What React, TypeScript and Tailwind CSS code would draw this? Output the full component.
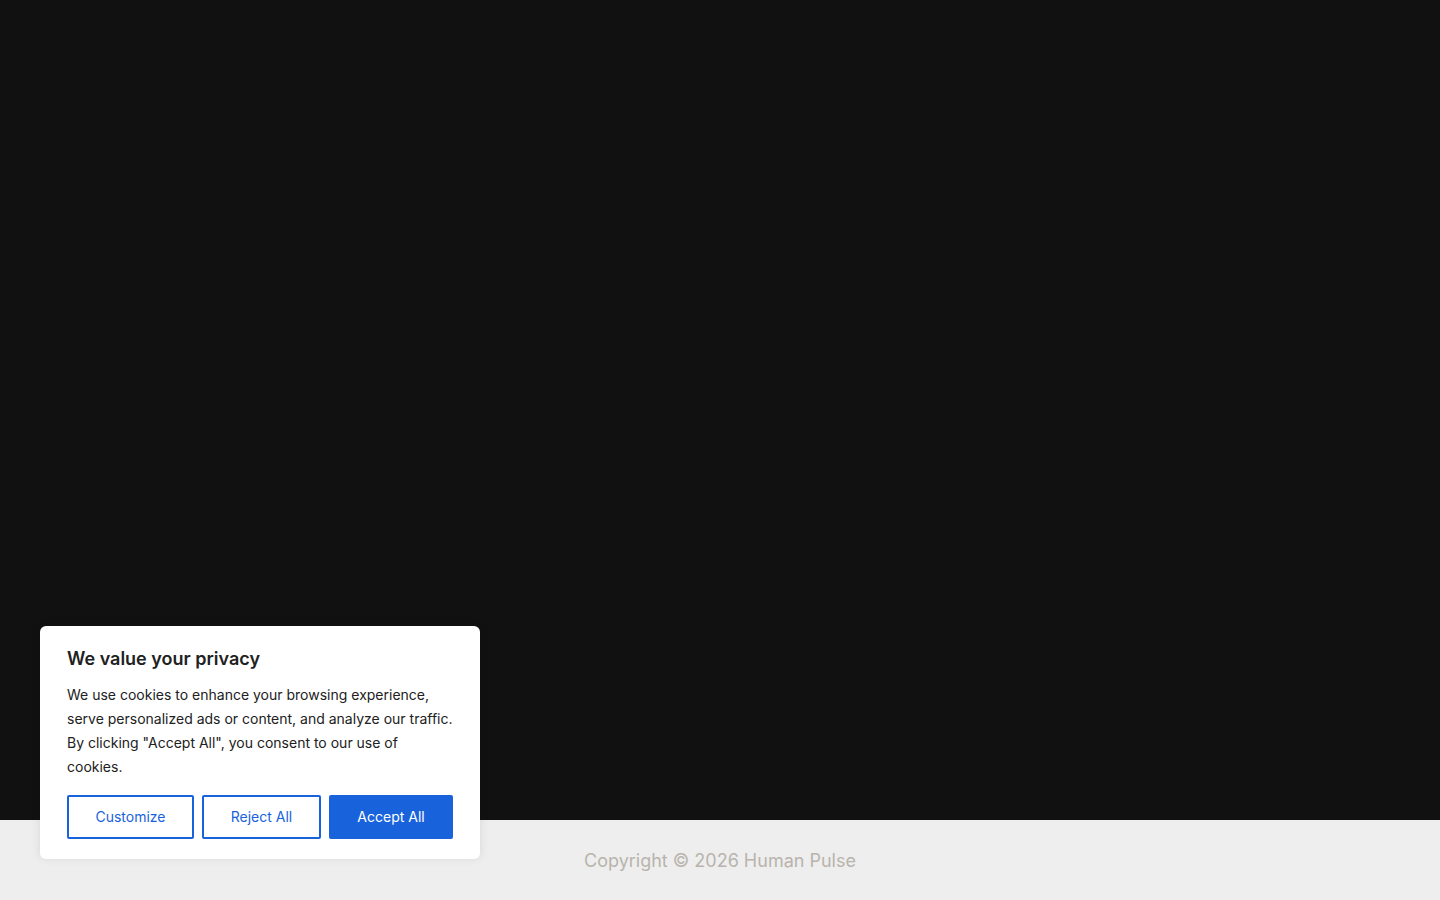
export default function App() {
  return (
    <div
      className="relative flex min-h-[900px] flex-col bg-[#111111]"
      style={{ fontFamily: 'Inter, "Noto Sans", sans-serif' }}
    >
      <main className="h-[820px] bg-[#111111]" />

      <footer className="flex h-[80px] items-center justify-center bg-[#eeeeee] pt-[2px]">
        <p className="text-[18px] leading-[28px] text-[#b8b4ad]">
          Copyright © 2026 Human Pulse
        </p>
      </footer>

      {/* cookie consent banner */}
      <div className="absolute left-[40px] top-[626px] w-[440px] rounded-[6px] bg-white px-[27px] pt-[21px] pb-[20px] shadow-[0_-1px_10px_rgba(0,0,0,0.1)]">
        <h2 className="mb-[12px] text-[18px] font-semibold leading-[24px] text-[#212121]">
          We value your privacy
        </h2>
        <p className="text-[14px] leading-[24px] text-[#212121]">
          We use cookies to enhance your browsing experience, serve personalized
          ads or content, and analyze our traffic. By clicking "Accept All", you
          consent to our use of cookies.
        </p>
        <div className="mt-[16px] flex gap-[8px]">
          <button className="h-[44px] w-[127px] rounded-[2px] border-2 border-[#1863dc] bg-white pb-[1px] text-[14px] text-[#1863dc]">
            Customize
          </button>
          <button className="h-[44px] w-[119px] rounded-[2px] border-2 border-[#1863dc] bg-white pb-[1px] text-[14px] text-[#1863dc]">
            Reject All
          </button>
          <button className="h-[44px] w-[124px] rounded-[2px] border-2 border-[#1863dc] bg-[#1863dc] pb-[1px] text-[14px] text-white">
            Accept All
          </button>
        </div>
      </div>
    </div>
  );
}
